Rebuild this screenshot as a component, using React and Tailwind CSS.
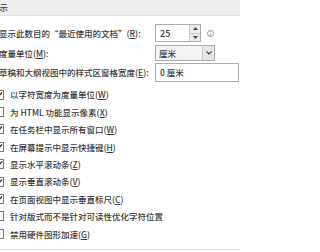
import React from "react";

const font = { fontFamily: '"Noto Sans CJK SC", "Noto Sans", sans-serif' };

function Check({ checked }) {
  return (
    <div className="w-[10px] h-[10px] border border-[#7a7a7a] bg-white flex items-center justify-center shrink-0">
      {checked && (
        <svg width="8" height="8" viewBox="0 0 8 8">
          <polyline points="1,4.2 3,6.2 7,1.5" fill="none" stroke="#333" strokeWidth="1.3" />
        </svg>
      )}
    </div>
  );
}

const items = [
  ["以字符宽度为度量单位(", "W", ")", true],
  ["为 HTML 功能显示像素(", "X", ")", false],
  ["在任务栏中显示所有窗口(", "W", ")", true],
  ["在屏幕提示中显示快捷键(", "H", ")", true],
  ["显示水平滚动条(", "Z", ")", true],
  ["显示垂直滚动条(", "V", ")", true],
  ["在页面视图中显示垂直标尺(", "C", ")", true],
  ["针对版式而不是针对可读性优化字符位置", "", "", false],
  ["禁用硬件图形加速(", "G", ")", false],
];

export default function App() {
  return (
    <div className="w-[240px] h-[252px] overflow-hidden bg-white text-[#3a3a3a] text-[8.5px] leading-none font-medium" style={font}>
      <div className="h-[16px] bg-[#efefef] border-b border-[#e2e2e2] flex items-center -ml-[9px] text-[8.5px]">
        显示
      </div>
      <div className="-ml-[1px] mt-[8px] flex flex-col">
        <div className="flex items-center h-[18px]">
          <div className="w-[156px] whitespace-nowrap">
            显示此数目的“最近使用的文档”(<span className="underline">R</span>):
          </div>
          <div className="w-[46px] h-[18px] border border-[#acacac] flex items-center">
            <div className="flex-1 pl-[4px] text-[9px]">25</div>
            <div className="w-[11px] h-[16px] bg-[#ececec] border-l border-[#c8c8c8] flex flex-col">
              <div className="flex-1 flex items-center justify-center border-b border-[#c8c8c8]">
                <svg width="5" height="3" viewBox="0 0 5 3"><polygon points="0,3 2.5,0 5,3" fill="#444" /></svg>
              </div>
              <div className="flex-1 flex items-center justify-center">
                <svg width="5" height="3" viewBox="0 0 5 3"><polygon points="0,0 2.5,3 5,0" fill="#444" /></svg>
              </div>
            </div>
          </div>
          <div className="ml-[6px] w-[7px] h-[7px] rounded-full border border-[#8a9ab0] flex items-center justify-center text-[5px] text-[#6a7a90]">
            i
          </div>
        </div>
        <div className="flex items-center h-[16px] mt-[3px]">
          <div className="w-[156px] whitespace-nowrap">
            度量单位(<span className="underline">M</span>):
          </div>
          <div className="w-[60px] h-[16px] border border-[#acacac] bg-[#f4f4f4] flex items-center">
            <div className="flex-1 pl-[3px] text-[8.5px]">厘米</div>
            <div className="w-[12px] h-[14px] bg-[#e6e6e6] border-l border-[#c8c8c8] flex items-center justify-center">
              <svg width="6" height="4" viewBox="0 0 6 4"><polyline points="0.5,0.5 3,3 5.5,0.5" fill="none" stroke="#444" strokeWidth="1.2" /></svg>
            </div>
          </div>
        </div>
        <div className="flex items-center h-[19px] mt-[2px]">
          <div className="w-[156px] whitespace-nowrap">
            草稿和大纲视图中的样式区窗格宽度(<span className="underline">E</span>):
          </div>
          <div className="w-[84px] h-[19px] border border-[#acacac] flex items-center pl-[4px]">0 厘米</div>
        </div>
      </div>
      <div className="mt-[4px] flex flex-col -ml-[6px]">
        {items.map(([a, k, b, c], i) => (
          <div key={i} className="h-[17.4px] flex items-center gap-[6px] whitespace-nowrap">
            <Check checked={c} />
            <span>
              {a}
              {k && <span className="underline">{k}</span>}
              {b}
            </span>
          </div>
        ))}
      </div>
      <div className="mt-[6px] border-t border-[#e4e4e4]" />
    </div>
  );
}
